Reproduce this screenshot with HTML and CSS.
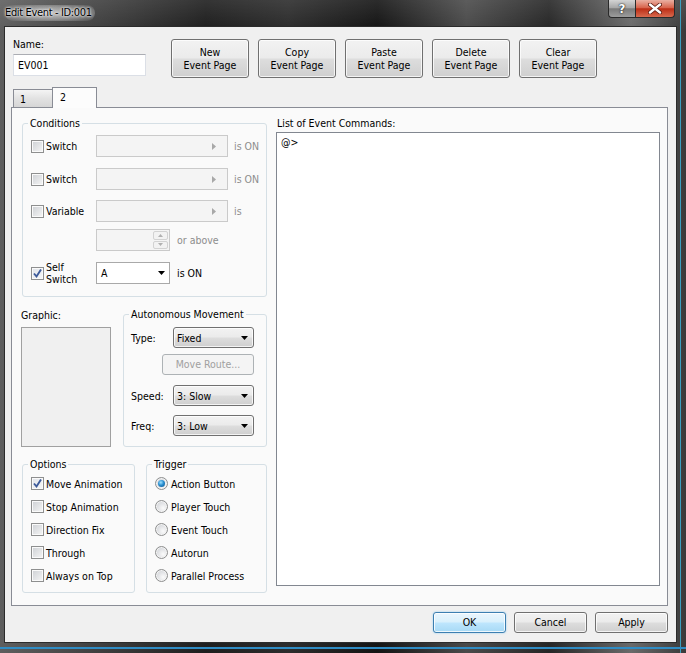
FILE: index.html
```html
<!DOCTYPE html>
<html>
<head>
<meta charset="utf-8">
<link rel="stylesheet" href="styles.css">
</head>
<body>
<div class="window">
  <div class="titlebar">
    <span class="title">Edit Event - ID:001</span>
    <div class="caption">
      <span class="cbtn help">?</span>
      <span class="cbtn close"><svg width="14" height="11" viewBox="0 0 14 11"><path d="M2 1.5 L12 9.5 M12 1.5 L2 9.5" stroke="#5a1a10" stroke-width="4" stroke-linecap="round"/><path d="M2 1.5 L12 9.5 M12 1.5 L2 9.5" stroke="#fff" stroke-width="2.4" stroke-linecap="round"/></svg></span>
    </div>
  </div>
  <div class="client">
    <div class="top-row">
      <div class="name-field">
        <span class="lbl">Name:</span>
        <div class="textbox">EV001</div>
      </div>
      <div class="page-buttons">
        <div class="btn page-btn"><span>New</span><span>Event Page</span></div>
        <div class="btn page-btn"><span>Copy</span><span>Event Page</span></div>
        <div class="btn page-btn"><span>Paste</span><span>Event Page</span></div>
        <div class="btn page-btn"><span>Delete</span><span>Event Page</span></div>
        <div class="btn page-btn"><span>Clear</span><span>Event Page</span></div>
      </div>
    </div>
    <div class="tabs">
      <span class="tab">1</span>
      <span class="tab active">2</span>
    </div>
    <div class="panel">
      <div class="left-col">
        <fieldset class="group conditions">
          <legend>Conditions</legend>
          <div class="gbody cond-body">
            <div class="crow r1">
              <div class="ccheck"><span class="cb"></span><span>Switch</span></div>
              <div class="selbox wide"><svg width="4" height="7" viewBox="0 0 4 7"><path d="M0 0 L4 3.5 L0 7 Z" fill="#a8a8a8"/></svg></div>
              <span class="suffix dim">is ON</span>
            </div>
            <div class="crow r2">
              <div class="ccheck"><span class="cb"></span><span>Switch</span></div>
              <div class="selbox wide"><svg width="4" height="7" viewBox="0 0 4 7"><path d="M0 0 L4 3.5 L0 7 Z" fill="#a8a8a8"/></svg></div>
              <span class="suffix dim">is ON</span>
            </div>
            <div class="crow r3">
              <div class="ccheck"><span class="cb"></span><span>Variable</span></div>
              <div class="selbox wide"><svg width="4" height="7" viewBox="0 0 4 7"><path d="M0 0 L4 3.5 L0 7 Z" fill="#a8a8a8"/></svg></div>
              <span class="suffix dim">is</span>
            </div>
            <div class="crow r4">
              <div class="ccheck"></div>
              <div class="spin">
                <div class="spin-btns">
                  <span class="sbtn"><svg width="5" height="3" viewBox="0 0 5 3"><path d="M0 3 L2.5 0 L5 3 Z" fill="#b0b0b0"/></svg></span>
                  <span class="sbtn"><svg width="5" height="3" viewBox="0 0 5 3"><path d="M0 0 L2.5 3 L5 0 Z" fill="#b0b0b0"/></svg></span>
                </div>
              </div>
              <span class="suffix narrow dim">or above</span>
            </div>
            <div class="crow r5">
              <div class="ccheck"><span class="cb checked"><svg width="11" height="11" viewBox="0 0 11 11"><path d="M2 5.5 L4.5 8.5 L9 1.5" fill="none" stroke="#3c5a9a" stroke-width="1.9"/></svg></span><span class="two">Self<br>Switch</span></div>
              <div class="combo-white"><span>A</span><svg width="7" height="4" viewBox="0 0 7 4"><path d="M0 0 L7 0 L3.5 4 Z" fill="#000"/></svg></div>
              <span class="suffix narrow">is ON</span>
            </div>
          </div>
        </fieldset>
        <div class="mid-row">
          <div class="graphic">
            <span class="lbl">Graphic:</span>
            <div class="gbox"></div>
          </div>
          <fieldset class="group auto">
            <legend>Autonomous Movement</legend>
            <div class="gbody auto-body">
              <div class="arow">
                <span>Type:</span>
                <div class="btn dd"><span>Fixed</span><svg width="7" height="4" viewBox="0 0 7 4"><path d="M0 0 L7 0 L3.5 4 Z" fill="#000"/></svg></div>
              </div>
              <div class="arow mr">
                <div class="mr-btn">Move Route...</div>
              </div>
              <div class="arow sp">
                <span>Speed:</span>
                <div class="btn dd"><span>3: Slow</span><svg width="7" height="4" viewBox="0 0 7 4"><path d="M0 0 L7 0 L3.5 4 Z" fill="#000"/></svg></div>
              </div>
              <div class="arow fq">
                <span>Freq:</span>
                <div class="btn dd"><span>3: Low</span><svg width="7" height="4" viewBox="0 0 7 4"><path d="M0 0 L7 0 L3.5 4 Z" fill="#000"/></svg></div>
              </div>
            </div>
          </fieldset>
        </div>
        <div class="bottom-row">
          <fieldset class="group options">
            <legend>Options</legend>
            <div class="gbody list-body">
              <div class="opt"><span class="cb checked"><svg width="11" height="11" viewBox="0 0 11 11"><path d="M2 5.5 L4.5 8.5 L9 1.5" fill="none" stroke="#3c5a9a" stroke-width="1.9"/></svg></span><span>Move Animation</span></div>
              <div class="opt"><span class="cb"></span><span>Stop Animation</span></div>
              <div class="opt"><span class="cb"></span><span>Direction Fix</span></div>
              <div class="opt"><span class="cb"></span><span>Through</span></div>
              <div class="opt"><span class="cb"></span><span>Always on Top</span></div>
            </div>
          </fieldset>
          <fieldset class="group trigger">
            <legend>Trigger</legend>
            <div class="gbody list-body">
              <div class="opt"><span class="rb on"><span class="dot"></span></span><span>Action Button</span></div>
              <div class="opt"><span class="rb"></span><span>Player Touch</span></div>
              <div class="opt"><span class="rb"></span><span>Event Touch</span></div>
              <div class="opt"><span class="rb"></span><span>Autorun</span></div>
              <div class="opt"><span class="rb"></span><span>Parallel Process</span></div>
            </div>
          </fieldset>
        </div>
      </div>
      <div class="right-col">
        <span class="lbl list-lbl">List of Event Commands:</span>
        <div class="listbox"><div class="cmd">@&gt;</div></div>
      </div>
    </div>
    <div class="dlg-buttons">
      <div class="btn dlg default">OK</div>
      <div class="btn dlg">Cancel</div>
      <div class="btn dlg">Apply</div>
    </div>
  </div>
</div>
</body>
</html>
```
FILE: styles.css
```css
* { box-sizing: border-box; }
html, body { margin: 0; padding: 0; }
body {
  width: 686px;
  height: 653px;
  overflow: hidden;
  background: #1c1c1c;
  font-family: "DejaVu Sans Condensed", "DejaVu Sans", sans-serif;
  font-stretch: condensed;
  font-size: 10.5px;
  color: #000;
}

.window {
  width: 686px;
  height: 653px;
  display: flex;
  flex-direction: column;
  padding: 0 9px 10px 4px;
  background:
    linear-gradient(to bottom, transparent 647px, #2f8cc4 647px, #2f8cc4 649px, transparent 649px),
    linear-gradient(to right, transparent 680px, #3b9fc0 680px, #3b9fc0 681px, transparent 681px),
    linear-gradient(rgba(255,255,255,0.10), rgba(255,255,255,0) 30px),
    linear-gradient(90deg, #5e5e5e 0%, #444 12%, #1e1e1e 30%, #2c2c2c 42%, #141414 55%, #4a4a4a 68%, #262626 80%, #6a6a6a 92%, #3a3a3a 100%);
}

/* Title bar */
.titlebar {
  height: 26px;
  display: flex;
  justify-content: space-between;
  align-items: flex-start;
}
.title {
  margin-left: 1px;
  margin-top: 5px;
  padding: 0 3px 0 0;
  line-height: 16px;
  font-size: 11px;
  letter-spacing: -0.35px;
  color: #000;
  border-radius: 8px;
  background: radial-gradient(ellipse at center, rgba(235,235,235,0.75) 0%, rgba(220,220,220,0.45) 55%, rgba(200,200,200,0) 100%);
  text-shadow: 0 0 3px #f2f2f2, 0 0 2px #f2f2f2;
}
.caption {
  display: flex;
  margin-right: 2px;
}
.cbtn {
  height: 18px;
  display: flex;
  align-items: center;
  justify-content: center;
  border: 1px solid #2a2a2a;
  border-top: none;
}
.help {
  width: 27px;
  border-radius: 0 0 0 4px;
  border-right: none;
  background: linear-gradient(#d4d4d4, #a8a8a8 45%, #7a7a7a 52%, #9c9c9c);
  color: #fff;
  font-family: "DejaVu Sans", sans-serif;
  font-stretch: normal;
  font-weight: bold;
  font-size: 12px;
  text-shadow: 0 0 2px #222, 0 0 1px #000;
}
.close {
  width: 40px;
  border-radius: 0 0 4px 0;
  background: linear-gradient(#eab0a2, #d8644c 45%, #bd2e16 52%, #d86a4e);
}

/* Client */
.client {
  background: #f0f0f0;
  border: 1px solid #2b2b2b;
  padding: 10px 8px 0 6px;
  display: flex;
  flex-direction: column;
  height: 617px;
}

.top-row {
  display: flex;
  align-items: flex-start;
  padding-left: 2px;
}
.name-field {
  width: 133px;
  display: flex;
  flex-direction: column;
}
.lbl { line-height: 14px; }
.textbox {
  margin-top: 3px;
  height: 22px;
  background: #fff;
  border: 1px solid #dbdfe6;
  border-top-color: #abadb3;
  padding-left: 4px;
  line-height: 20px;
}
.page-buttons {
  display: flex;
  gap: 9px;
  margin-left: 25px;
  margin-top: 2px;
}
.btn {
  border: 1px solid #707070;
  border-radius: 3px;
  background: linear-gradient(#f2f2f2 0%, #ebebeb 48%, #dddddd 52%, #cfcfcf 100%);
  box-shadow: inset 0 0 0 1px rgba(255,255,255,0.75);
}
.page-btn {
  width: 78px;
  height: 39px;
  display: flex;
  flex-direction: column;
  align-items: center;
  justify-content: center;
  line-height: 13px;
}

/* Tabs */
.tabs {
  display: flex;
  align-items: flex-end;
  height: 20px;
  margin-top: 9px;
  padding-left: 2px;
  position: relative;
  z-index: 1;
}
.tab {
  width: 40px;
  height: 18px;
  border: 1px solid #898c95;
  border-bottom: none;
  background: linear-gradient(#f4f4f4, #e2e2e2 50%, #d6d6d6);
  padding-left: 6px;
  line-height: 19px;
}
.tab.active {
  width: 45px;
  height: 21px;
  margin-left: -1px;
  margin-bottom: -1px;
  background: #fcfcfc;
  padding-left: 7px;
  line-height: 19px;
}

/* Panel */
.panel {
  height: 499px;
  border: 1px solid #898c95;
  background: #fafafa;
  display: flex;
  gap: 9px;
  padding: 8px 7px 0 10px;
}
.left-col {
  width: 245px;
  display: flex;
  flex-direction: column;
}
.right-col {
  flex: 1;
  display: flex;
  flex-direction: column;
}

fieldset.group {
  margin: 0;
  padding: 0;
  min-width: 0;
  border: 1px solid #d5dfe5;
  border-radius: 3px;
}
fieldset.group legend {
  padding: 0 2px;
  margin-left: 5px;
  line-height: 14px;
}

/* Conditions */
.cond-body {
  padding: 5px 0 12px 8px;
}
.crow {
  display: flex;
  align-items: center;
  height: 22px;
}
.crow.r2 { margin-top: 11px; }
.crow.r3 { margin-top: 10px; }
.crow.r4 { margin-top: 7px; }
.crow.r5 { margin-top: 11px; }
.ccheck {
  width: 65px;
  display: flex;
  align-items: center;
  gap: 2px;
}
.two { line-height: 12px; }
.selbox {
  width: 132px;
  height: 22px;
  border: 1px solid #cacaca;
  background: #f4f4f4;
  display: flex;
  align-items: center;
  justify-content: flex-end;
  padding-right: 11px;
}
.suffix { margin-left: 6px; }
.suffix.narrow { margin-left: 7px; }
.dim { color: #8d8d8d; }
.spin {
  width: 74px;
  height: 22px;
  border: 1px solid #cacaca;
  background: #f4f4f4;
  display: flex;
  justify-content: flex-end;
  padding: 1px;
}
.spin-btns {
  width: 15px;
  display: flex;
  flex-direction: column;
  gap: 1px;
}
.sbtn {
  flex: 1;
  border: 1px solid #d2d2d2;
  border-radius: 2px;
  background: #f2f2f2;
  display: flex;
  align-items: center;
  justify-content: center;
}
.combo-white {
  width: 74px;
  height: 22px;
  border: 1px solid #a9a9a9;
  background: #fff;
  display: flex;
  align-items: center;
  justify-content: space-between;
  padding: 0 4px 0 4px;
}

/* Checkbox & radio */
.cb {
  width: 13px;
  height: 13px;
  flex: none;
  border: 1px solid #8e8f8f;
  background: linear-gradient(135deg, #cdd0d4, #f6f6f6);
  box-shadow: inset 0 0 0 1px #fafafa;
  display: flex;
  align-items: center;
  justify-content: center;
}
.cb.checked {
  background: linear-gradient(135deg, #dfe3ea, #f8f8f8);
}
.rb {
  width: 13px;
  height: 13px;
  flex: none;
  border-radius: 50%;
  border: 1px solid #8e8f8f;
  background: radial-gradient(circle at 65% 65%, #fbfbfb, #d6d8dc 70%);
  box-shadow: inset 0 0 0 1px #f4f4f4;
  display: flex;
  align-items: center;
  justify-content: center;
}
.dot {
  width: 7px;
  height: 7px;
  border-radius: 50%;
  background: radial-gradient(circle at 40% 35%, #9fe1ff 0%, #2a8fd0 45%, #0d4f86 100%);
}

/* Mid row */
.mid-row {
  display: flex;
  margin-top: 10px;
}
.graphic {
  width: 90px;
  margin-left: -1px;
  display: flex;
  flex-direction: column;
}
.graphic .lbl { margin-top: 1px; }
.gbox {
  margin-top: 5px;
  height: 120px;
  border: 1px solid #a0a0a0;
  background: #f0f0f0;
}
fieldset.auto {
  width: 144px;
  margin-left: 12px;
}
.auto-body {
  padding: 6px 12px 9px 7px;
}
.arow {
  display: flex;
  align-items: center;
  justify-content: space-between;
  height: 21px;
}
.arow.mr { justify-content: flex-end; margin-top: 6px; }
.arow.sp { margin-top: 10px; }
.arow.fq { margin-top: 9px; }
.dd {
  width: 81px;
  height: 21px;
  display: flex;
  align-items: center;
  justify-content: space-between;
  padding: 0 5px 0 3px;
}
.mr-btn {
  width: 92px;
  height: 21px;
  border: 1px solid #adb2b5;
  border-radius: 3px;
  background: #f4f4f4;
  color: #a0a0a0;
  text-align: center;
  line-height: 19px;
}

/* Bottom row */
.bottom-row {
  display: flex;
  margin-top: 10px;
}
fieldset.options { width: 113px; }
fieldset.trigger { width: 121px; margin-left: 11px; }
.list-body {
  padding: 1px 0 5px 8px;
}
.opt {
  display: flex;
  align-items: center;
  gap: 2px;
  height: 23px;
}
.trigger .opt { gap: 3px; }

/* Right column */
.list-lbl { margin-left: 1px; }
.listbox {
  margin-top: 2px;
  height: 454px;
  background: #fff;
  border: 1px solid #828790;
  padding: 2px 4px;
}
.cmd { line-height: 14px; }

/* Dialog buttons */
.dlg-buttons {
  display: flex;
  justify-content: flex-end;
  gap: 8px;
  margin-top: 6px;
}
.dlg {
  width: 73px;
  height: 21px;
  text-align: center;
  line-height: 19px;
}
.dlg.default {
  border-color: #3c7fb1;
  background: linear-gradient(#eaf6fd 0%, #d9f0fc 48%, #bee6fd 52%, #a7d9f5 100%);
  box-shadow: inset 0 0 0 1px rgba(255,255,255,0.8), 0 0 2px #8ccbf0;
}
```
